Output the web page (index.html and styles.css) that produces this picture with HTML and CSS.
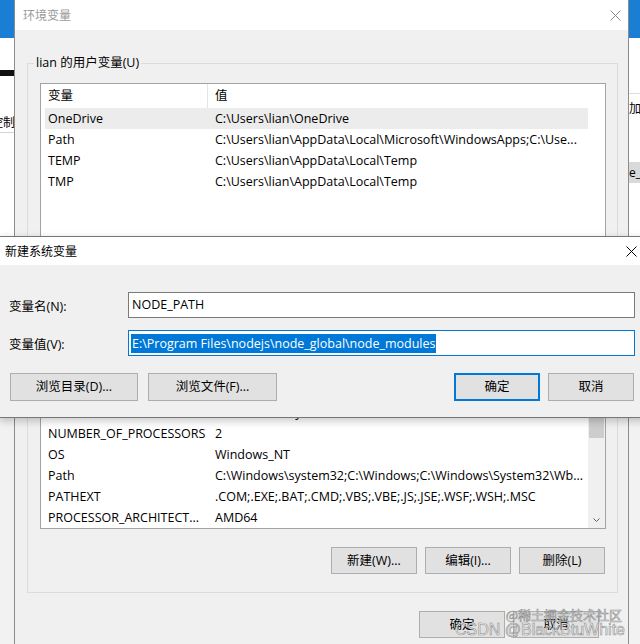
FILE: index.html
```html
<!DOCTYPE html>
<html lang="zh-CN">
<head>
<meta charset="utf-8">
<title>环境变量</title>
<link rel="stylesheet" href="styles.css">
</head>
<body>
<div class="desktop">

  <div class="bgwin">
    <div class="bg-top"></div>
    <div class="bg-main">
      <div class="bg-left">
        <div class="bg-bar"></div>
        <div class="bg-cut"><span>面板控制</span></div>
        <div class="bg-rule"></div>
      </div>
      <div class="bg-right">
        <div class="bg-rule-r"></div>
        <div class="bg-text-r">加</div>
        <div class="bg-chip">e_</div>
      </div>
    </div>
  </div>

  <div class="env">
    <div class="env-title">
      <span>环境变量</span>
      <svg class="close gray" width="11" height="11" viewBox="0 0 11 11"><path d="M0.5 0.5 L10.5 10.5 M10.5 0.5 L0.5 10.5"/></svg>
    </div>
    <div class="env-body">
      <fieldset class="group">
        <legend>lian 的用户变量(U)</legend>
        <div class="listbox user">
          <div class="lv">
            <div class="lv-head"><span>变量</span><span>值</span></div>
            <div class="lv-row sel"><span>OneDrive</span><span>C:\Users\lian\OneDrive</span></div>
            <div class="lv-row"><span>Path</span><span>C:\Users\lian\AppData\Local\Microsoft\WindowsApps;C:\Use...</span></div>
            <div class="lv-row"><span>TEMP</span><span>C:\Users\lian\AppData\Local\Temp</span></div>
            <div class="lv-row"><span>TMP</span><span>C:\Users\lian\AppData\Local\Temp</span></div>
          </div>
          <div class="sb none"></div>
        </div>
        <div class="btn-row">
          <button class="btn">新建(N)...</button>
          <button class="btn">编辑(E)...</button>
          <button class="btn">删除(D)</button>
        </div>
      </fieldset>

      <fieldset class="group sys">
        <legend>系统变量(S)</legend>
        <div class="listbox system">
          <div class="lv">
            <div class="lv-head"><span>变量</span><span>值</span></div>
            <div class="lv-row"><span>ComSpec</span><span>C:\Windows\system32\cmd.exe</span></div>
            <div class="lv-row"><span>DriverData</span><span>C:\Windows\System32\Drivers\DriverData</span></div>
            <div class="lv-row"><span>NUMBER_OF_PROCESSORS</span><span>2</span></div>
            <div class="lv-row"><span>OS</span><span>Windows_NT</span></div>
            <div class="lv-row"><span>Path</span><span>C:\Windows\system32;C:\Windows;C:\Windows\System32\Wb...</span></div>
            <div class="lv-row"><span>PATHEXT</span><span>.COM;.EXE;.BAT;.CMD;.VBS;.VBE;.JS;.JSE;.WSF;.WSH;.MSC</span></div>
            <div class="lv-row"><span>PROCESSOR_ARCHITECT...</span><span>AMD64</span></div>
          </div>
          <div class="sb">
            <div class="sb-arrow"></div>
            <div class="sb-thumb"></div>
            <div class="sb-fill"></div>
            <div class="sb-arrow">
              <svg width="7" height="4" viewBox="0 0 7 4"><path d="M0.5 0.5 L3.5 3.5 L6.5 0.5"/></svg>
            </div>
          </div>
        </div>
        <div class="btn-row">
          <button class="btn">新建(W)...</button>
          <button class="btn">编辑(I)...</button>
          <button class="btn">删除(L)</button>
        </div>
      </fieldset>

      <div class="btn-row bottom">
        <button class="btn">确定</button>
        <button class="btn">取消</button>
      </div>
    </div>
  </div>

  <div class="dlg">
    <div class="dlg-title">
      <span>新建系统变量</span>
      <svg class="close" width="11" height="11" viewBox="0 0 11 11"><path d="M0.5 0.5 L10.5 10.5 M10.5 0.5 L0.5 10.5"/></svg>
    </div>
    <div class="dlg-body">
      <div class="field">
        <label>变量名(N):</label>
        <div class="input">NODE_PATH</div>
      </div>
      <div class="field">
        <label>变量值(V):</label>
        <div class="input focus"><span class="selection">E:\Program Files\nodejs\node_global\node_modules</span></div>
      </div>
      <div class="dlg-buttons">
        <div class="grp">
          <button class="btn wide">浏览目录(D)...</button>
          <button class="btn wide2">浏览文件(F)...</button>
        </div>
        <div class="grp right">
          <button class="btn default">确定</button>
          <button class="btn">取消</button>
        </div>
      </div>
    </div>
  </div>

  <div class="watermark">
    <div class="wm1">@稀土掘金技术社区</div>
    <div class="wm2">CSDN @BlackBtuWhite</div>
  </div>
</div>
</body>
</html>
```

FILE: styles.css
```css
* { box-sizing: border-box; }

html, body {
  margin: 0;
  padding: 0;
}

body {
  width: 640px;
  height: 644px;
  overflow: hidden;
  background: #f0f0f0;
  font-family: "Open Sans", "Noto Sans CJK SC", sans-serif;
  font-size: 12.5px;
  color: #000;
}

.desktop {
  position: relative;
  width: 640px;
  height: 644px;
  overflow: hidden;
}

/* ---------- window in the background ---------- */
.bgwin {
  position: absolute;
  inset: 0;
  display: flex;
  flex-direction: column;
  background: #fff;
}

.bg-top {
  height: 38px;
  flex: none;
  background: #1a7fd4;
}

.bg-main {
  flex: 1;
  display: flex;
  justify-content: space-between;
  background: linear-gradient(#fff 0 198px, #f2f2f2 198px);
}

.bg-left {
  width: 15px;
  display: flex;
  flex-direction: column;
}

.bg-bar {
  margin-top: 32px;
  height: 6px;
  background: #111;
}

.bg-cut {
  margin-top: 39px;
  height: 16px;
  line-height: 16px;
  display: flex;
  justify-content: flex-end;
  white-space: nowrap;
  font-size: 12px;
}

.bg-rule {
  margin-top: 1px;
  border-top: 1px solid #d4d4d4;
}

.bg-right {
  width: 12px;
  display: flex;
  flex-direction: column;
  white-space: nowrap;
  font-size: 12px;
}

.bg-rule-r {
  margin-top: 55px;
  border-top: 1px solid #dedede;
}

.bg-text-r {
  margin-top: 7px;
  height: 16px;
  line-height: 16px;
  padding-left: 1px;
}

.bg-chip {
  margin-top: 45px;
  height: 21px;
  line-height: 21px;
  background: #d9d9d9;
  padding-left: 1px;
}

/* ---------- 环境变量 window ---------- */
.env {
  position: absolute;
  left: 14px;
  top: 0;
  width: 615px;
  height: 670px;
  display: flex;
  flex-direction: column;
  background: #f0f0f0;
  border-left: 1px solid #8c8c8c;
  border-right: 1px solid #8c8c8c;
}

.env-title {
  height: 30px;
  flex: none;
  display: flex;
  align-items: center;
  justify-content: space-between;
  padding: 0 7px 0 8px;
  background: #fff;
  color: #9a9a9a;
  font-size: 12px;
}

.close path {
  stroke: #000;
  stroke-width: 1;
  fill: none;
}

.close.gray path {
  stroke: #8a8a8a;
}

.env-body {
  flex: 1;
  padding: 25px 10px 0 12px;
}

.group {
  margin: 0;
  min-width: 0;
  padding: 12px 11px 18px 12px;
  border: 1px solid #dcdcdc;
}

.group legend {
  margin-left: -6px;
  padding: 0 2px;
  height: 16px;
  line-height: 16px;
}

.group.sys {
  margin-top: 14px;
}

.listbox {
  display: flex;
  background: #fff;
  border: 1px solid #a3a3a3;
}

.listbox.user {
  height: 167px;
}

.lv {
  flex: 1;
  min-width: 0;
}

.lv-head {
  display: grid;
  grid-template-columns: 167px 1fr;
  height: 24px;
  line-height: 24px;
}

.lv-head span {
  padding-left: 7px;
}

.lv-head span:first-child {
  border-right: 1px solid #e5e5e5;
}

.lv-row {
  margin-left: 4px;
  display: grid;
  grid-template-columns: 167px 1fr;
  height: 21px;
  line-height: 21px;
}

.lv-row span {
  padding-left: 3px;
  white-space: nowrap;
  overflow: hidden;
}

.lv-row.sel {
  background: #ececec;
}

.sb {
  width: 17px;
  flex: none;
  display: flex;
  flex-direction: column;
  background: #f0f0f0;
}

.sb.none {
  background: #fff;
}

.sb-arrow {
  height: 17px;
  flex: none;
  display: flex;
  align-items: center;
  justify-content: center;
}

.sb-arrow path {
  stroke: #606060;
  stroke-width: 1;
  fill: none;
}

.sb-thumb {
  height: 64px;
  flex: none;
  margin: 0 1px;
  background: #cdcdcd;
}

.sb-fill {
  flex: 1;
}

.btn-row {
  margin-top: 18px;
  margin-right: 1px;
  display: flex;
  justify-content: flex-end;
  gap: 8px;
}

.btn-row.bottom {
  margin-top: 18px;
  margin-right: 19px;
}

.btn {
  width: 86px;
  height: 27px;
  padding: 0;
  margin: 0;
  font: inherit;
  color: #000;
  background: #e1e1e1;
  border: 1px solid #adadad;
  line-height: 25px;
  text-align: center;
  white-space: nowrap;
}

/* ---------- 新建系统变量 dialog ---------- */
.dlg {
  position: absolute;
  left: -1px;
  top: 236px;
  width: 648px;
  height: 182px;
  display: flex;
  flex-direction: column;
  background: #f0f0f0;
  border: 1px solid #777;
  box-shadow: 0 3px 8px rgba(0, 0, 0, 0.22);
}

.dlg-title {
  height: 28px;
  flex: none;
  display: flex;
  align-items: center;
  justify-content: space-between;
  padding: 0 9px 0 5px;
  background: #fff;
  font-size: 12px;
}

.dlg-body {
  flex: 1;
  padding: 27px 11px 0 9px;
  display: flex;
  flex-direction: column;
}

.field {
  display: grid;
  grid-template-columns: 119px 1fr;
  align-items: center;
  height: 26px;
}

.field + .field {
  margin-top: 12px;
}

.input {
  height: 26px;
  padding-left: 3px;
  line-height: 24px;
  white-space: nowrap;
  overflow: hidden;
  background: #fff;
  border: 1px solid #7a7a7a;
}

.input.focus {
  padding-left: 2px;
  border-color: #0078d7;
}

.selection {
  display: inline-block;
  vertical-align: middle;
  padding: 0 1px;
  line-height: 19px;
  color: #fff;
  background: #0078d7;
}

.dlg-buttons {
  margin-top: 17px;
  padding: 0 1px;
  display: flex;
  justify-content: space-between;
}

.grp {
  display: flex;
  gap: 10px;
}

.grp.right {
  gap: 8px;
}

.dlg-buttons .btn {
  height: 28px;
  line-height: 26px;
}

.btn.wide {
  width: 128px;
}

.btn.wide2 {
  width: 129px;
}

.dlg-buttons .btn.default {
  border: 2px solid #0078d7;
  line-height: 24px;
}

/* ---------- watermark overlay ---------- */
.watermark {
  position: absolute;
  right: 15px;
  top: 607px;
  text-align: right;
  color: rgba(245, 245, 245, 0.85);
  -webkit-text-stroke: 0.6px rgba(110, 110, 110, 0.75);
  white-space: nowrap;
}

.wm1 {
  margin-right: 3px;
  height: 16px;
  line-height: 16px;
  font-size: 13px;
  font-family: "Noto Sans CJK SC", sans-serif;
}

.wm2 {
  height: 14px;
  line-height: 14px;
  font-size: 16px;
  font-family: "Liberation Sans", sans-serif;
}
```
